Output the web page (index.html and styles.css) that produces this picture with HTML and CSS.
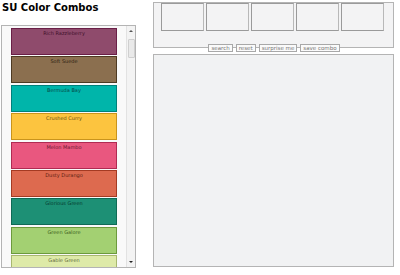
FILE: index.html
```html
<!DOCTYPE html>
<html lang="en">
<head>
  <meta charset="UTF-8">
  <title>SU Color Combos</title>
  <link rel="stylesheet" href="styles.css">
</head>
<body>
  <div class="page">
    <div class="left">
      <h1>SU Color Combos</h1>
      <div class="palette">
        <div class="swatches">
          <div class="swatch razzleberry">Rich Razzleberry</div>
          <div class="swatch suede">Soft Suede</div>
          <div class="swatch bermuda">Bermuda Bay</div>
          <div class="swatch curry">Crushed Curry</div>
          <div class="swatch melon">Melon Mambo</div>
          <div class="swatch durango">Dusty Durango</div>
          <div class="swatch glorious">Glorious Green</div>
          <div class="swatch galore">Green Galore</div>
          <div class="swatch gable">Gable Green</div>
        </div>
        <!-- полоса прокрутки -->
        <div class="scrollbar">
          <span class="arrow up"></span>
          <span class="thumb"></span>
          <span class="arrow down"></span>
        </div>
      </div>
    </div>

    <div class="right">
      <!-- выбранные цвета -->
      <div class="combo">
        <div class="slot"></div>
        <div class="slot"></div>
        <div class="slot"></div>
        <div class="slot"></div>
        <div class="slot"></div>
      </div>
      <div class="actions">
        <button>search</button>
        <button>reset</button>
        <button>surprise me</button>
        <button>save combo</button>
      </div>
      <div class="results"></div>
    </div>
  </div>
</body>
</html>
```

FILE: styles.css
```css
body {
  margin: 0;
  font-family: "DejaVu Sans", Verdana, sans-serif;
  background: #fff;
  color: #000;
}

.page {
  display: flex;
  gap: 17px;
  padding: 0 0 0 1px;
}

h1 {
  margin: 0;
  padding: 2px 0 0 1px;
  height: 25px;
  box-sizing: border-box;
  font-size: 10px;
  font-weight: bold;
}

/* список цветов */
.palette {
  width: 135px;
  height: 243px;
  box-sizing: border-box;
  border: 1px solid #b4b4b4;
  background: #f9f9f9;
  display: flex;
  overflow: hidden;
}

.swatches {
  flex: 1;
  padding: 2px 0 0 9px;
  overflow: hidden;
}

.scrollbar {
  width: 8px;
  border-left: 1px solid #e2e2e2;
  background: #f3f3f3;
  display: flex;
  flex-direction: column;
  align-items: center;
}

.arrow {
  width: 0;
  height: 0;
  border-left: 2px solid transparent;
  border-right: 2px solid transparent;
}

.arrow.up {
  margin-top: 4px;
  border-bottom: 2px solid #555;
}

.arrow.down {
  margin-top: auto;
  margin-bottom: 4px;
  border-top: 2px solid #222;
}

.thumb {
  width: 7px;
  height: 19px;
  margin-top: 7px;
  box-sizing: border-box;
  border: 1px solid #cfcfcf;
  background: #e9e9e9;
  border-radius: 1px;
}

.swatch {
  width: 106px;
  height: 27px;
  box-sizing: border-box;
  margin-bottom: 1.4px;
  border: 1px solid;
  font-size: 5px;
  text-align: center;
  padding-top: 1px;
}

.razzleberry { background: #8f4b6c; border-color: #6a1f47; color: #3e1029; }
.suede       { background: #8b6f4f; border-color: #4e3a22; color: #2e2212; }
.bermuda     { background: #00b5aa; border-color: #00807a; color: #044a48; }
.curry       { background: #fcc43f; border-color: #c9941c; color: #6a4e10; }
.melon       { background: #e9577f; border-color: #b02a52; color: #6a1a30; }
.durango     { background: #dd6a4f; border-color: #a43a22; color: #5e2214; }
.glorious    { background: #1d9075; border-color: #0f6a55; color: #053a2e; }
.galore      { background: #a3d072; border-color: #6c9a3c; color: #3e5e20; }
.gable       { background: #deeaa8; border-color: #a8b870; color: #5e6a3a; }

/* правая часть */
.right {
  width: 241px;
  padding-top: 2px;
}

.combo {
  height: 46px;
  box-sizing: border-box;
  border: 1px solid #b4b4b4;
  background: #f3f3f4;
  display: flex;
  gap: 2px;
  padding: 0 7px;
}

.slot {
  width: 43px;
  height: 28px;
  box-sizing: border-box;
  border: 1px solid #9a9a9a;
  border-right-color: #b8b8b8;
  background: #f3f3f4;
}

.actions {
  display: flex;
  justify-content: center;
  gap: 3px;
  margin-top: -4px;
  padding-left: 1px;
}

button {
  height: 8px;
  padding: 0 2px;
  border: 1px solid #a8a8a8;
  background: #fafafa;
  color: #777;
  font-family: "DejaVu Sans", Verdana, sans-serif;
  font-size: 5.5px;
  line-height: 6px;
}

.results {
  margin-top: 2px;
  height: 213px;
  box-sizing: border-box;
  border: 1px solid #b4b4b4;
  background: #f1f2f3;
}
```
